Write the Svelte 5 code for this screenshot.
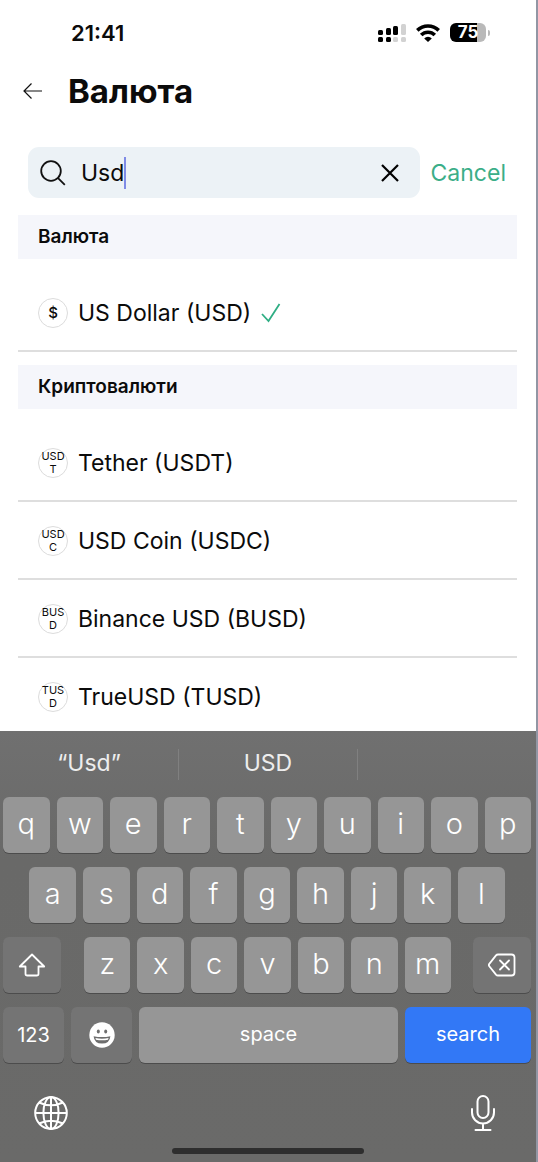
<script lang="ts">
	type Currency = { code: string; name: string; sign?: string };

	const sections: { title: string; items: Currency[] }[] = [
		{ title: 'Валюта', items: [{ code: 'USD', name: 'US Dollar', sign: '$' }] },
		{
			title: 'Криптовалюти',
			items: [
				{ code: 'USDT', name: 'Tether' },
				{ code: 'USDC', name: 'USD Coin' },
				{ code: 'BUSD', name: 'Binance USD' },
				{ code: 'TUSD', name: 'TrueUSD' }
			]
		}
	];

	let query = $state('Usd');
	let selected = $state('USD');

	const filtered = $derived(
		sections
			.map((s) => ({
				...s,
				items: s.items.filter((c) =>
					`${c.name} (${c.code})`.toLowerCase().includes(query.toLowerCase())
				)
			}))
			.filter((s) => s.items.length)
	);

	const type = (key: string) => (query += key);
	const erase = () => (query = query.slice(0, -1));
</script>

{#snippet letters(row: string)}
	{#each row as key}
		<button class="key" onclick={() => type(key)}>{key}</button>
	{/each}
{/snippet}

<div class="screen">
	<div class="status">
		<span class="time">21:41</span>
		<div class="indicators">
			<svg width="28" height="20" viewBox="0 0 28 20" aria-hidden="true">
				<rect x="0" y="7" width="5" height="5" rx="1.5" />
				<rect x="8" y="5" width="5" height="7" rx="1.5" />
				<rect x="15" y="3" width="5" height="9" rx="1.5" />
				<rect x="23" y="1" width="5" height="11" rx="1.5" fill="#d2d2d2" />
				<rect x="0" y="14" width="5" height="5" rx="1.5" />
				<rect x="8" y="14" width="5" height="5" rx="1.5" />
				<rect x="15" y="14" width="5" height="5" rx="1.5" fill="#d2d2d2" />
				<rect x="23" y="14" width="5" height="5" rx="1.5" fill="#d2d2d2" />
			</svg>
			<svg width="24" height="18" viewBox="0 0 24 18" aria-hidden="true">
				<g fill="none" stroke="#000" stroke-width="3.6">
					<path d="M1.3 6.4a15.2 15.2 0 0 1 21.4 0" />
					<path d="M5.2 11a9.6 9.6 0 0 1 13.6 0" />
				</g>
				<path d="M12 18 8.2 14.4a5.4 5.4 0 0 1 7.6 0z" />
			</svg>
			<div class="battery"><span>75</span></div>
		</div>
	</div>

	<header>
		<button class="back" aria-label="Назад">
			<svg width="20" height="18" viewBox="0 0 20 18" fill="none" stroke="#111" stroke-width="1.2">
				<path d="M19 9H1M8.5 1.5 1 9l7.5 7.5" />
			</svg>
		</button>
		<h1>Валюта</h1>
	</header>

	<div class="search">
		<label class="field">
			<svg width="26" height="26" viewBox="0 0 26 26" fill="none" stroke="#111" stroke-width="1.8">
				<circle cx="11" cy="11" r="9.8" />
				<path d="m17.8 17.8 7 7" />
			</svg>
			<span class="entry">
				<input type="text" aria-label="Search" bind:value={query} />
				<span class="caret"></span>
			</span>
			<button class="clear" aria-label="Clear" onclick={() => (query = '')}>
				<svg width="18" height="18" viewBox="0 0 18 18" fill="none" stroke="#000" stroke-width="2.2">
					<path d="m1 1 16 16M17 1 1 17" />
				</svg>
			</button>
		</label>
		<button class="cancel" onclick={() => (query = '')}>Cancel</button>
	</div>

	<main>
		{#each filtered as section}
			<section>
				<h2>{section.title}</h2>
				<ul>
					{#each section.items as item}
						<li>
							<button class="row" onclick={() => (selected = item.code)}>
								<span class="badge" class:sign={item.sign}>{item.sign ?? item.code}</span>
								<span>{item.name} ({item.code})</span>
								{#if selected === item.code}
									<svg width="20" height="20" viewBox="0 0 20 20" fill="none" stroke="#2fae84" stroke-width="1.8">
										<path d="m1 11 6.5 7L18.5 1" />
									</svg>
								{/if}
							</button>
						</li>
					{/each}
				</ul>
			</section>
		{/each}
	</main>

	<div class="keyboard">
		<div class="suggestions">
			<button>“{query}”</button>
			<button onclick={() => (query = query.toUpperCase())}>{query.toUpperCase()}</button>
			<button aria-label="No suggestion"></button>
		</div>
		<div class="keys">
			<div class="keyrow">{@render letters('qwertyuiop')}</div>
			<div class="keyrow middle">{@render letters('asdfghjkl')}</div>
			<div class="keyrow lower">
				<button class="key dark shift" aria-label="Shift">
					<svg width="28" height="24" viewBox="0 0 28 24" fill="none" stroke="#fff" stroke-width="1.8" stroke-linejoin="round">
						<path d="M14 1.5 1.8 13.5h5.7v7.2q0 1.8 1.8 1.8h9.4q1.8 0 1.8-1.8v-7.2h5.7z" />
					</svg>
				</button>
				{@render letters('zxcvbnm')}
				<button class="key dark delete" aria-label="Delete" onclick={erase}>
					<svg width="28" height="24" viewBox="0 0 28 24" fill="none" stroke="#fff" stroke-width="1.8" stroke-linejoin="round" stroke-linecap="round">
						<path d="M10 1.5h13.5q3 0 3 3v15q0 3-3 3H10q-1.2 0-2-.9L1.3 13.2q-1-1.2 0-2.4L8 2.4q.8-.9 2-.9z" />
						<path d="m12 7.5 9 9M21 7.5l-9 9" />
					</svg>
				</button>
			</div>
			<div class="keyrow">
				<button class="key dark wide">123</button>
				<button class="key dark wide" aria-label="Emoji">
					<svg width="26" height="26" viewBox="0 0 26 26">
						<circle cx="13" cy="13" r="12.7" fill="#fff" />
						<g fill="#6e6e6e">
							<ellipse cx="9.3" cy="9.6" rx="1.5" ry="2" />
							<ellipse cx="16.7" cy="9.6" rx="1.5" ry="2" />
							<path d="M4.6 14.2q8.4 1.8 16.8 0-.7 7.4-8.4 7.4t-8.4-7.4z" />
						</g>
						<path d="M6.4 16q6.6 1.5 13.2 0l-.6 1.7q-6 1.2-12 0z" fill="#fff" />
					</svg>
				</button>
				<button class="key space" onclick={() => type(' ')}>space</button>
				<button class="key go">search</button>
			</div>
		</div>
		<div class="dock">
			<button aria-label="Next keyboard">
				<svg width="34" height="34" viewBox="0 0 34 34" fill="none" stroke="#fff" stroke-width="2">
					<circle cx="17" cy="17" r="15.8" />
					<ellipse cx="17" cy="17" rx="7.6" ry="16" />
					<path d="M17 1v32M1 17h32M5 6.5q12 5.6 24 0M5 27.5q12-5.6 24 0" />
				</svg>
			</button>
			<button aria-label="Dictate">
				<svg width="26" height="36" viewBox="0 0 26 36" fill="none" stroke="#fff" stroke-width="2" stroke-linecap="round">
					<rect x="7.5" y="1" width="11" height="22" rx="5.5" />
					<path d="M2 14v3.5a11 11 0 0 0 22 0V14M13 28.5V35M5.5 35h15" />
				</svg>
			</button>
		</div>
		<div class="home"></div>
	</div>
</div>

<style>
	:global(body) {
		margin: 0;
		background: #fff;
	}
	.screen {
		box-sizing: border-box;
		display: flex;
		flex-direction: column;
		height: 100vh;
		border-right: 2px solid #9296a4;
		font-family: Inter, 'Noto Sans', sans-serif;
		color: #0b0b0b;
	}
	button {
		margin: 0;
		padding: 0;
		border: 0;
		background: none;
		font: inherit;
		color: inherit;
		cursor: pointer;
	}
	svg {
		display: block;
		flex: none;
	}
	.status {
		display: flex;
		justify-content: space-between;
		align-items: center;
		height: 65px;
		padding: 0 47px 0 71px;
	}
	.time {
		font-size: 22px;
		font-weight: 600;
	}
	.indicators {
		display: flex;
		align-items: center;
		gap: 10px;
	}
	.battery {
		position: relative;
		width: 36px;
		margin-right: 3px;
		border-radius: 6px;
		background: linear-gradient(90deg, #000 76%, #b9b9b9 76%);
		color: #fff;
		font-size: 17px;
		font-weight: 700;
		line-height: 19px;
		text-align: center;
	}
	.battery::after {
		content: '';
		position: absolute;
		right: -4px;
		top: 7px;
		width: 2px;
		height: 6px;
		border-radius: 0 2px 2px 0;
		background: #b9b9b9;
	}
	header {
		display: flex;
		align-items: center;
		gap: 25px;
		height: 51px;
		padding-left: 23px;
	}
	h1 {
		margin: 0;
		font-size: 33px;
		font-weight: 700;
	}
	.search {
		display: flex;
		align-items: center;
		gap: 11px;
		margin: 31px 30px 17px 28px;
	}
	.field {
		display: flex;
		flex: 1;
		align-items: center;
		gap: 15px;
		height: 51px;
		padding: 0 21px 0 12px;
		border-radius: 11px;
		background: #ecf2f6;
	}
	.entry {
		display: flex;
		flex: 1;
		align-items: center;
		min-width: 0;
	}
	input {
		field-sizing: content;
		min-width: 1px;
		max-width: 100%;
		padding: 0;
		border: 0;
		outline: 0;
		background: none;
		font: inherit;
		font-size: 23px;
		color: inherit;
		caret-color: transparent;
	}
	.caret {
		width: 2px;
		height: 32px;
		background: #7f8be6;
	}
	.cancel {
		font-size: 23px;
		color: #3bae88;
	}
	main {
		flex: 1;
		min-height: 0;
		padding: 0 19px 0 18px;
		overflow: auto;
		scrollbar-width: none;
	}
	section + section {
		margin-top: 13px;
	}
	h2 {
		margin: 0;
		padding-left: 20px;
		background: #f5f6fb;
		font-size: 19px;
		font-weight: 600;
		line-height: 44px;
	}
	ul {
		margin: 0;
		padding: 15px 0 0;
		list-style: none;
	}
	li {
		border-bottom: 2px solid #dedede;
	}
	.row {
		display: flex;
		align-items: center;
		gap: 10px;
		width: 100%;
		height: 76px;
		padding: 1px 0 0 20px;
		font-size: 23px;
		text-align: left;
	}
	.badge {
		display: flex;
		align-items: center;
		box-sizing: border-box;
		width: 30px;
		height: 30px;
		padding: 0 1px;
		border: 1px solid #dcdcdc;
		border-radius: 50%;
		font-size: 11px;
		line-height: 13px;
		text-align: center;
		word-break: break-all;
	}
	.sign {
		justify-content: center;
		font-size: 15px;
		font-weight: 500;
	}
	.keyboard {
		background: linear-gradient(#707070, #696968 30%, #6a6a69);
		color: #fff;
	}
	.suggestions {
		display: flex;
		align-items: center;
		height: 66px;
	}
	.suggestions button {
		flex: 1;
		height: 31px;
		padding-bottom: 2px;
		font-size: 23px;
		color: #ededed;
	}
	.suggestions button + button {
		border-left: 1px solid #808080;
	}
	.keys {
		display: flex;
		flex-direction: column;
		gap: 14px;
		padding: 0 5px 0 3px;
	}
	.keyrow {
		display: flex;
		gap: 7px;
	}
	.middle {
		padding: 0 5%;
	}
	.key {
		display: flex;
		flex: 1;
		align-items: center;
		justify-content: center;
		min-width: 0;
		height: 56px;
		padding-bottom: 3px;
		border-radius: 6px;
		background: #969696;
		box-shadow: 0 1px 0 #4c4c4c;
		font-size: 29px;
		font-weight: 300;
	}
	.dark {
		padding-bottom: 0;
		background: #747474;
		font-size: 20px;
		font-weight: 400;
	}
	.shift,
	.delete {
		flex: 0 0 11%;
	}
	.shift {
		margin-right: 16px;
	}
	.delete {
		margin-left: 15px;
	}
	.wide {
		flex: 0 0 61px;
	}
	.space,
	.go {
		font-size: 20px;
		font-weight: 400;
	}
	.go {
		flex: 0 0 126px;
		background: #3278f6;
	}
	.dock {
		display: flex;
		justify-content: space-between;
		align-items: center;
		padding: 32px 40px 0 34px;
	}
	.home {
		width: 36%;
		height: 6px;
		margin: 17px auto 8px;
		border-radius: 3px;
		background: #2e2e2e;
	}
</style>
